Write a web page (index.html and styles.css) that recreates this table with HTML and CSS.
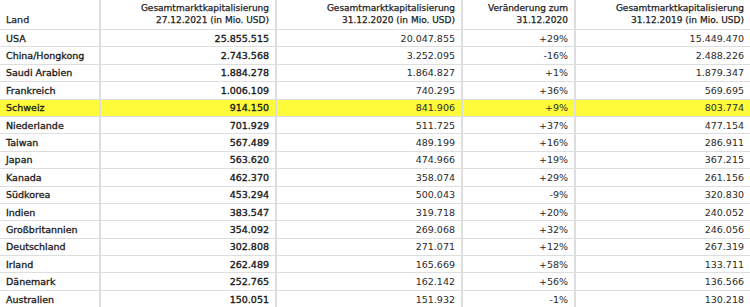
FILE: index.html
```html
<!DOCTYPE html>
<html lang="de">
<head>
<meta charset="utf-8">
<link rel="stylesheet" href="styles.css">
</head>
<body>
<table class="mc">
  <colgroup>
    <col class="c1"><col class="c2"><col class="c3"><col class="c4"><col class="c5">
  </colgroup>
  <thead>
    <tr>
      <th class="land">Land</th>
      <th>Gesamtmarktkapitalisierung<br>27.12.2021 (in Mio. USD)</th>
      <th>Gesamtmarktkapitalisierung<br>31.12.2020 (in Mio. USD)</th>
      <th>Veränderung zum<br>31.12.2020</th>
      <th>Gesamtmarktkapitalisierung<br>31.12.2019 (in Mio. USD)</th>
    </tr>
  </thead>
  <tbody>
    <tr><td>USA</td><td>25.855.515</td><td>20.047.855</td><td>+29%</td><td>15.449.470</td></tr>
    <tr><td>China/Hongkong</td><td>2.743.568</td><td>3.252.095</td><td>-16%</td><td>2.488.226</td></tr>
    <tr><td>Saudi Arabien</td><td>1.884.278</td><td>1.864.827</td><td>+1%</td><td>1.879.347</td></tr>
    <tr><td>Frankreich</td><td>1.006.109</td><td>740.295</td><td>+36%</td><td>569.695</td></tr>
    <tr class="hl"><td>Schweiz</td><td>914.150</td><td>841.906</td><td>+9%</td><td>803.774</td></tr>
    <tr><td>Niederlande</td><td>701.929</td><td>511.725</td><td>+37%</td><td>477.154</td></tr>
    <tr><td>Taiwan</td><td>567.489</td><td>489.199</td><td>+16%</td><td>286.911</td></tr>
    <tr><td>Japan</td><td>563.620</td><td>474.966</td><td>+19%</td><td>367.215</td></tr>
    <tr><td>Kanada</td><td>462.370</td><td>358.074</td><td>+29%</td><td>261.156</td></tr>
    <tr><td>Südkorea</td><td>453.294</td><td>500.043</td><td>-9%</td><td>320.830</td></tr>
    <tr><td>Indien</td><td>383.547</td><td>319.718</td><td>+20%</td><td>240.052</td></tr>
    <tr><td>Großbritannien</td><td>354.092</td><td>269.068</td><td>+32%</td><td>246.056</td></tr>
    <tr><td>Deutschland</td><td>302.808</td><td>271.071</td><td>+12%</td><td>267.319</td></tr>
    <tr><td>Irland</td><td>262.489</td><td>165.669</td><td>+58%</td><td>133.711</td></tr>
    <tr><td>Dänemark</td><td>252.765</td><td>162.142</td><td>+56%</td><td>136.566</td></tr>
    <tr><td>Australien</td><td>150.051</td><td>151.932</td><td>-1%</td><td>130.218</td></tr>
  </tbody>
</table>
</body>
</html>
```

FILE: styles.css
```css
html, body {
  margin: 0;
  padding: 0;
  background: #fff;
}
body {
  font-family: "DejaVu Sans", Verdana, sans-serif;
  font-size: 9.5px;
  color: #222;
  overflow: hidden;
}
.mc {
  border-collapse: collapse;
  width: 750px;
  table-layout: fixed;
}
.c1 { width: 100px; }
.c2 { width: 176px; }
.c3 { width: 186px; }
.c4 { width: 113px; }
.c5 { width: 175px; }
.mc th {
  font-weight: normal;
  font-size: 9px;
  -webkit-text-stroke: 0.25px #222;
  text-align: right;
  vertical-align: bottom;
  line-height: 12px;
  padding: 0 6px 3px 6px;
  height: 26px;
  border-left: 2px solid #dedede;
  color: #222;
}
.mc th.land {
  text-align: left;
  border-left: none;
  font-size: 9.5px;
}
.mc td {
  height: 16.4px;
  padding: 0 6px;
  line-height: 11px;
  text-align: right;
  border-left: 2px solid #dedede;
  border-top: 1px solid #dedede;
  vertical-align: middle;
  white-space: nowrap;
  color: #2a2a2a;
}
.mc td:first-child {
  text-align: left;
  border-left: none;
  -webkit-text-stroke: 0.3px #1a1a1a;
  color: #1a1a1a;
}
.mc td:nth-child(2) {
  -webkit-text-stroke: 0.35px #1a1a1a;
  color: #1a1a1a;
}
.mc tr.hl td {
  background: #fffa3a;
}
```
